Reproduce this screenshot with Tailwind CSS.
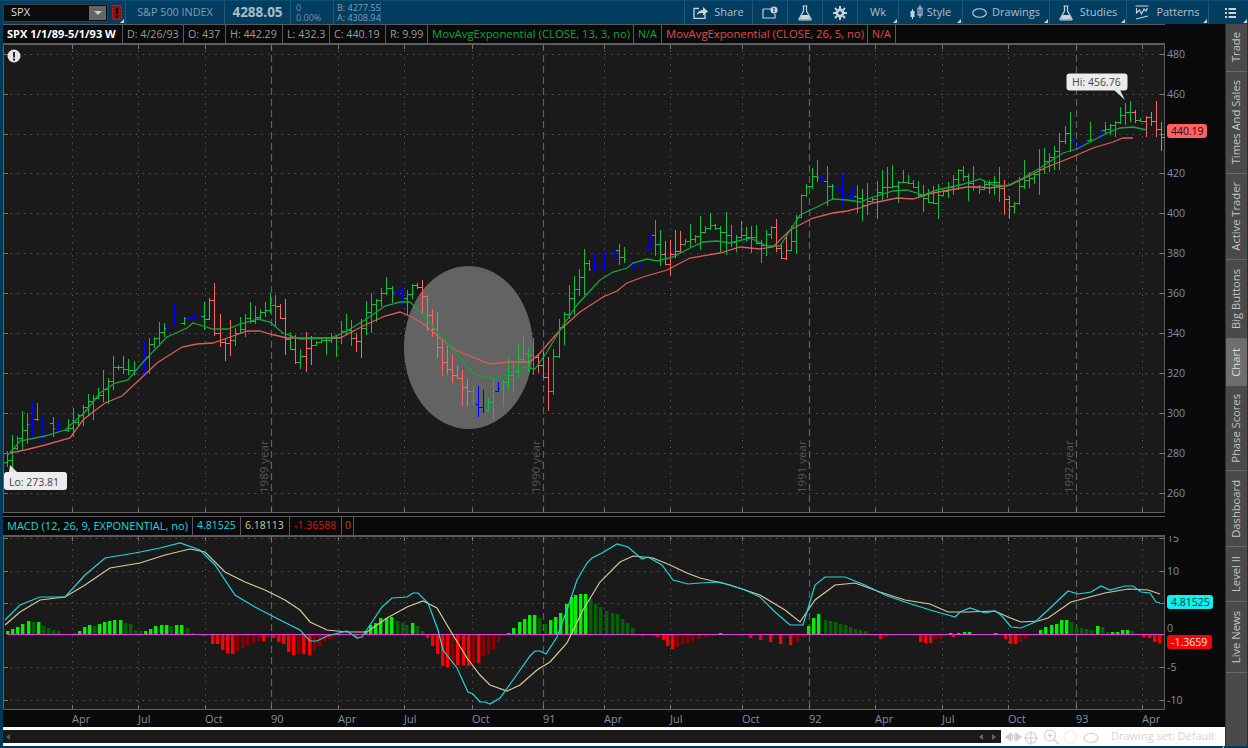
<!DOCTYPE html>
<html lang="en">
<head>
<meta charset="UTF-8">
<title>SPX Chart</title>
<script src="https://cdn.jsdelivr.net/npm/@tailwindcss/browser@4"></script>
</head>
<body class="bg-[#033a5a]">
<div class="w-[1248px] h-[748px] overflow-hidden flex flex-col bg-[#033a5a] text-[#aebfcc] [font-family:'Open_Sans',sans-serif]">

  <!-- top toolbar -->
  <header class="h-[24px] flex items-stretch text-[11px] bg-[#033d5f] border-t border-[#0a4d72]">
    <div class="w-[126px] relative flex items-center border-r border-[#1c5678] pl-[3px]">
      <div class="w-[105px] h-[18px] bg-[#0c0c0c] border border-[#3a3a3a] rounded-[2px] flex items-center justify-between pl-[7px] pr-[1px] text-white">
        <span class="text-[#dddddd]">SPX</span>
        <span class="w-[17px] h-[14px] bg-[#666666] flex items-center justify-center">
          <span class="w-0 h-0 border-l-[4px] border-r-[4px] border-t-[4px] border-l-transparent border-r-transparent border-t-[#cccccc]"></span>
        </span>
      </div>
      <svg class="ml-[4px]" width="10" height="15" viewBox="0 0 10 15"><rect x="0.5" y="0.5" width="9" height="14" rx="1" fill="#8f1010" stroke="#d02020" stroke-dasharray="2 1"/><rect x="4" y="3" width="2" height="6" fill="#100000"/><rect x="4" y="10.500" width="2" height="2" fill="#100000"/></svg>
      <span class="absolute right-[1px] bottom-[1px] w-0 h-0 border-l-[4px] border-b-[4px] border-l-transparent border-b-[#c8d4dc]"></span>
    </div>
    <div class="w-[99px] flex items-center justify-center border-r border-[#1c5678] text-[#7f9db3] text-[10.800px]">S&amp;P 500 INDEX</div>
    <div class="w-[66px] flex items-center justify-center border-r border-[#1c5678] text-[13.500px] font-bold text-[#a9bdca]">4288.05</div>
    <div class="w-[43px] flex flex-col justify-center pl-[5px] border-r border-[#1c5678] text-[9px] leading-[10px] text-[#6f8fa6]"><span>0</span><span>0.00%</span></div>
    <div class="w-[47px] flex flex-col justify-center pl-[3px] border-r border-[#1c5678] text-[9px] leading-[10px] text-[#7f9db3] whitespace-nowrap"><span>B: 4277.55</span><span>A: 4308.94</span></div>
    <div class="w-[304px] border-r border-[#1c5678]"></div>

    <div class="w-[68px] flex items-center justify-center gap-[6px] border-r border-[#1c5678]">
      <svg width="15" height="13" viewBox="0 0 15 13" fill="none"><path d="M6 2.500H1v10h11V8" stroke="#c8d4dc" stroke-width="1.300"/><path d="M3.500 9C4.500 5.500 7 4 10 4V1l5 4.500L10 9.500V7C7.500 7 5 7.500 3.500 9z" fill="#c8d4dc"/></svg>
      <span>Share</span>
    </div>
    <div class="w-[35px] flex items-center justify-center border-r border-[#1c5678]">
      <svg width="16" height="13" viewBox="0 0 16 13" fill="none"><path d="M1 3h8M1 3v9h12V8" stroke="#c8d4dc" stroke-width="1.200"/><circle cx="12" cy="4" r="3.600" fill="#c8d4dc"/><rect x="11.400" y="1.800" width="1.200" height="2.800" fill="#033d5f"/><rect x="11.400" y="5" width="1.200" height="1.100" fill="#033d5f"/></svg>
    </div>
    <div class="w-[35px] flex items-center justify-center border-r border-[#1c5678]">
      <svg width="14" height="16" viewBox="0 0 14 16" fill="none"><path d="M4.500 1h5M5.500 1v5L1 14c-.3.6 0 1 .7 1h10.600c.7 0 1-.4.7-1L8.500 6V1" stroke="#c8d4dc" stroke-width="1.200"/><path d="M3.700 10h6.600l2.200 4.500h-11z" fill="#c8d4dc"/></svg>
    </div>
    <div class="w-[35px] flex items-center justify-center border-r border-[#1c5678]">
      <svg width="14" height="14" viewBox="0 0 14 14"><path d="M7 2.500a4.500 4.500 0 100 9 4.500 4.500 0 000-9zm0 2.700a1.800 1.800 0 110 3.600 1.800 1.800 0 010-3.600z" fill="#c8d4dc" fill-rule="evenodd"/><path d="M7 0v3M7 11v3M0 7h3M11 7h3M2 2l2 2M10 10l2 2M12 2l-2 2M4 10l-2 2" stroke="#c8d4dc" stroke-width="2"/></svg>
    </div>
    <div class="w-[41px] relative flex items-center justify-center border-r border-[#1c5678]"><span>Wk</span><span class="absolute right-[1px] bottom-[1px] w-0 h-0 border-l-[4px] border-b-[4px] border-l-transparent border-b-[#c8d4dc]"></span></div>
    <div class="w-[64px] relative flex items-center justify-center gap-[4px] border-r border-[#1c5678]">
      <svg width="13" height="15" viewBox="0 0 13 15"><rect x="0.500" y="6" width="4" height="6" fill="#c8d4dc"/><rect x="2" y="4" width="1" height="10" fill="#c8d4dc"/><rect x="8" y="3" width="4" height="7" fill="none" stroke="#c8d4dc"/><rect x="9.500" y="0" width="1" height="13" fill="#c8d4dc"/></svg>
      <span>Style</span><span class="absolute right-[1px] bottom-[1px] w-0 h-0 border-l-[4px] border-b-[4px] border-l-transparent border-b-[#c8d4dc]"></span>
    </div>
    <div class="w-[87px] relative flex items-center justify-center gap-[5px] border-r border-[#1c5678]">
      <svg width="15" height="10" viewBox="0 0 15 10"><ellipse cx="7.500" cy="5" rx="6.800" ry="4.300" fill="none" stroke="#c8d4dc" stroke-width="1.100"/></svg>
      <span>Drawings</span><span class="absolute right-[1px] bottom-[1px] w-0 h-0 border-l-[4px] border-b-[4px] border-l-transparent border-b-[#c8d4dc]"></span>
    </div>
    <div class="w-[77px] relative flex items-center justify-center gap-[7px] border-r border-[#1c5678]">
      <svg width="14" height="16" viewBox="0 0 14 16" fill="none"><path d="M4.500 1h5M5.500 1v5L1 14c-.3.6 0 1 .7 1h10.600c.7 0 1-.4.7-1L8.500 6V1" stroke="#c8d4dc" stroke-width="1.200"/><path d="M3.700 10h6.600l2.200 4.500h-11z" fill="#c8d4dc"/></svg>
      <span>Studies</span><span class="absolute right-[1px] bottom-[1px] w-0 h-0 border-l-[4px] border-b-[4px] border-l-transparent border-b-[#c8d4dc]"></span>
    </div>
    <div class="w-[82px] relative flex items-center justify-center gap-[7px] border-r border-[#1c5678]">
      <svg width="14" height="15" viewBox="0 0 14 15" fill="none" stroke="#c8d4dc" stroke-width="1.100"><path d="M0.500 1h13M1 14L13 11M1.500 3v5l3-3 2 4 2.500-5 2 2 1.500-3"/></svg>
      <span>Patterns</span><span class="absolute right-[1px] bottom-[1px] w-0 h-0 border-l-[4px] border-b-[4px] border-l-transparent border-b-[#c8d4dc]"></span>
    </div>
    <div class="flex-1 relative flex items-center justify-center">
      <svg class="ml-[3px]" width="11" height="10" viewBox="0 0 11 10" fill="#c8d4dc"><rect y="0" width="2" height="2"/><rect x="3.500" y="0" width="7.500" height="2"/><rect y="4" width="2" height="2"/><rect x="3.500" y="4" width="7.500" height="2"/><rect y="8" width="2" height="2"/><rect x="3.500" y="8" width="7.500" height="2"/></svg>
      <span class="absolute right-[1px] bottom-[1px] w-0 h-0 border-l-[4px] border-b-[4px] border-l-transparent border-b-[#c8d4dc]"></span>
    </div>
  </header>

  <div class="flex-1 flex pl-[3px] pb-[2px] min-h-0">
    <!-- chart column -->
    <main class="w-[1222px] flex flex-col bg-[#0a0a0a]">
      <div class="h-[20px] shrink-0 flex text-[10.700px] border-t border-b border-[#5a5a5a] whitespace-nowrap bg-[#0a0a0a] text-[#9a9a9a] w-[1162px]">
        <div class="w-[120px] flex items-center pl-[4px] border-r border-[#5a5a5a] font-bold text-white text-[11px]">SPX 1/1/89-5/1/93 W</div>
        <div class="w-[61px] flex items-center pl-[4px] border-r border-[#5a5a5a]">D: 4/26/93</div>
        <div class="w-[42px] flex items-center pl-[4px] border-r border-[#5a5a5a]">O: 437</div>
        <div class="w-[57px] flex items-center pl-[4px] border-r border-[#5a5a5a]">H: 442.29</div>
        <div class="w-[47px] flex items-center pl-[4px] border-r border-[#5a5a5a]">L: 432.3</div>
        <div class="w-[56px] flex items-center pl-[4px] border-r border-[#5a5a5a]">C: 440.19</div>
        <div class="w-[42px] flex items-center pl-[4px] border-r border-[#5a5a5a]">R: 9.99</div>
        <div class="w-[206px] flex items-center pl-[4px] border-r border-[#5a5a5a] text-[#12a53a] text-[11.300px]">MovAvgExponential (CLOSE, 13, 3, no)</div>
        <div class="w-[28px] flex items-center pl-[4px] border-r border-[#5a5a5a] text-[#12a53a]">N/A</div>
        <div class="w-[206px] flex items-center pl-[4px] border-r border-[#5a5a5a] text-[#e24b4b] text-[11.300px]">MovAvgExponential (CLOSE, 26, 5, no)</div>
        <div class="w-[28px] flex items-center pl-[4px] border-r border-[#5a5a5a] text-[#e24b4b]">N/A</div>
      </div>
      <svg id="price" class="block shrink-0" width="1222" height="469" viewBox="3 44 1222 469"></svg>
      <div class="h-[3px] shrink-0"></div>
      <div class="h-[20px] shrink-0 flex text-[10.500px] border-t border-b border-[#5a5a5a] whitespace-nowrap w-[1162px]">
        <div class="w-[190px] flex items-center pl-[4px] border-r border-[#5a5a5a] text-[#1fd7df] text-[11px]">MACD (12, 26, 9, EXPONENTIAL, no)</div>
        <div class="w-[48px] flex items-center pl-[4px] border-r border-[#5a5a5a] text-[#1fd7df]">4.81525</div>
        <div class="w-[49px] flex items-center pl-[4px] border-r border-[#5a5a5a] text-[#d8c89a]">6.18113</div>
        <div class="w-[52px] flex items-center pl-[4px] border-r border-[#5a5a5a] text-[#e01010]">-1.36588</div>
        <div class="w-[12px] flex items-center pl-[3px] border-r border-[#5a5a5a] text-[#c04040]">0</div>
      </div>
      <svg id="macd" class="block shrink-0" width="1222" height="191" viewBox="3 536 1222 191"></svg>
      <div class="h-[19px] shrink-0 bg-white flex items-center">
        <div class="w-[998px] shrink-0 h-[13px] bg-[#1a1a1a] flex items-center justify-between pl-[3px] pr-[5px] text-[#777777]">
          <span class="w-0 h-0 border-t-[3px] border-b-[3px] border-r-[4px] border-t-transparent border-b-transparent border-r-[#555555]"></span>
          <span class="flex gap-[9px]">
            <span class="w-0 h-0 border-t-[3px] border-b-[3px] border-r-[4px] border-t-transparent border-b-transparent border-r-[#666666]"></span>
            <span class="w-0 h-0 border-t-[3px] border-b-[3px] border-l-[4px] border-t-transparent border-b-transparent border-l-[#666666]"></span>
          </span>
        </div>
        <div class="flex-1 flex items-center text-[11px] text-[#d4d4d4] whitespace-nowrap relative">
          <svg class="ml-[3px] shrink-0" width="107" height="16" viewBox="0 0 107 16" fill="none" stroke="#d0d0d0" stroke-width="1.200">
            <path d="M2 8l5-4v8zM17 8l-5-4v8z" fill="#d0d0d0"/><path d="M8.500 5v6M10.500 5v6"/>
            <circle cx="27" cy="9" r="5.500"/><path d="M27 2v14M20 9h14"/>
            <circle cx="46" cy="6.500" r="5.500"/><path d="M50 10.500l5 5M43.500 6.500h5M46 4v5"/>
            <circle cx="66" cy="8" r="6" stroke="#eeeeee"/>
            <ellipse cx="87" cy="9" rx="7" ry="4.500"/>
          </svg>
          <span>Drawing set: Default</span>
          <span class="absolute right-[1px] bottom-[-5px] w-0 h-0 border-l-[4px] border-b-[4px] border-l-transparent border-b-[#d8d8d8]"></span>
        </div>
      </div>
    </main>

    <!-- side tabs -->
    <nav class="w-[21px] ml-[1px] flex flex-col bg-[#4a4a4a] text-[11.200px] text-[#c4c4c4] whitespace-nowrap">
      <div class="h-[48px] flex items-center justify-center border-b border-[#6a6a6a]"><span class="[writing-mode:vertical-rl] rotate-180">Trade</span></div>
      <div class="h-[102px] flex items-center justify-center border-b border-[#6a6a6a]"><span class="[writing-mode:vertical-rl] rotate-180">Times And Sales</span></div>
      <div class="h-[86px] flex items-center justify-center border-b border-[#6a6a6a]"><span class="[writing-mode:vertical-rl] rotate-180">Active Trader</span></div>
      <div class="h-[79px] flex items-center justify-center border-b border-[#6a6a6a]"><span class="[writing-mode:vertical-rl] rotate-180">Big Buttons</span></div>
      <div class="h-[47px] flex items-center justify-center border-b border-[#6a6a6a] bg-[#6e6e6e] text-[#dddddd]"><span class="[writing-mode:vertical-rl] rotate-180">Chart</span></div>
      <div class="h-[85px] flex items-center justify-center border-b border-[#6a6a6a]"><span class="[writing-mode:vertical-rl] rotate-180">Phase Scores</span></div>
      <div class="h-[76px] flex items-center justify-center border-b border-[#6a6a6a]"><span class="[writing-mode:vertical-rl] rotate-180">Dashboard</span></div>
      <div class="h-[55px] flex items-center justify-center border-b border-[#6a6a6a]"><span class="[writing-mode:vertical-rl] rotate-180">Level II</span></div>
      <div class="h-[71px] flex items-center justify-center border-b border-[#6a6a6a]"><span class="[writing-mode:vertical-rl] rotate-180">Live News</span></div>
    </nav>
  </div>
</div>

<script>
// everything below is in page pixels, the svg viewBoxes line up with the page
const ticks = [72,138,205,271,338,404,472,543,604,670,742,809,875,942,1008,1076,1142];
const years = {271:'1989 year',543:'1990 year',809:'1991 year',1076:'1992 year'};
const tickNames = ['Apr','Jul','Oct','90','Apr','Jul','Oct','91','Apr','Jul','Oct','92','Apr','Jul','Oct','93','Apr'];

const ema13 = [[8,455],[20,441],[45,436],[65,430],[85,412],[100,393],[115,383],[128,380],[143,362],[167,337],[187,328],[193,323],[203,326],[213,329],[228,329],[240,324],[258,319],[270,322],[283,333],[300,339],[330,338],[345,332],[365,320],[385,306],[400,302],[410,302],[425,317],[440,335],[460,358],[475,375],[495,379],[510,373],[525,367],[535,369],[547,352],[560,330],[577,305],[600,280],[613,272],[627,268],[633,263],[647,259],[657,261],[673,257],[690,248],[703,242],[717,241],[730,243],[750,238],[767,246],[780,246],[800,215],[817,207],[833,199],[847,200],[860,202],[870,198],[893,191],[907,190],[923,195],[937,190],[960,185],[980,179],[993,185],[1007,186],[1023,178],[1040,168],[1063,153],[1077,149],[1090,142],[1107,133],[1120,128],[1133,127],[1147,130]];
const ema26 = [[10,453],[25,450],[45,445],[70,438],[83,420],[93,412],[105,403],[122,396],[137,382],[157,363],[182,347],[197,344],[213,343],[233,336],[247,331],[260,331],[270,334],[287,338],[300,338],[340,338],[365,325],[385,316],[400,312],[412,317],[425,325],[440,338],[455,350],[475,358],[490,364],[510,362],[530,362],[540,353],[560,330],[580,312],[603,297],[617,291],[627,283],[643,277],[667,270],[690,258],[720,253],[740,247],[760,249],[773,247],[790,230],[813,218],[833,213],[847,211],[860,208],[873,203],[897,198],[913,199],[933,193],[967,187],[980,187],[990,188],[1010,185],[1027,177],[1047,167],[1070,158],[1093,148],[1113,142],[1123,138],[1133,138]];
const closes = [[7,462],[15,440],[25,425],[35,420],[45,425],[60,430],[70,425],[80,412],[90,400],[100,392],[110,375],[115,365],[130,372],[140,362],[150,345],[160,330],[170,320],[178,322],[190,318],[200,315],[205,320],[210,295],[215,340],[225,345],[235,335],[245,320],[255,318],[265,310],[272,300],[278,310],[285,340],[295,360],[305,350],[315,340],[330,338],[345,330],[355,345],[365,315],[375,300],[385,290],[395,290],[405,300],[412,285],[420,290],[425,310],[435,340],[445,370],[455,375],[465,390],[475,405],[485,410],[490,395],[500,385],[510,375],[520,355],[530,355],[540,365],[548,390],[555,340],[565,310],[575,285],[585,260],[590,270],[600,265],[615,250],[625,262],[640,265],[650,235],[665,262],[680,245],[695,235],[712,225],[730,240],[745,235],[760,245],[770,225],[780,260],[790,245],[800,200],[810,175],[820,180],[835,190],[850,195],[865,205],[880,190],[895,183],[910,185],[930,205],[945,190],[960,170],[975,190],[990,180],[1000,190],[1012,210],[1020,185],[1035,175],[1050,155],[1065,135],[1075,145],[1090,140],[1100,130],[1110,125],[1120,115],[1127,110],[1135,122],[1150,118],[1160,137]];
const macdLine = [[5,620],[20,605],[40,597],[65,597],[85,575],[105,558],[135,553],[160,548],[180,543],[200,550],[215,565],[235,595],[255,607],[280,620],[300,630],[310,641],[317,641],[327,636],[347,631],[357,638],[362,637],[372,622],[382,607],[392,598],[407,597],[413,593],[418,593],[428,603],[438,630],[443,650],[457,668],[468,692],[473,694],[480,702],[485,702],[490,704],[500,698],[513,680],[530,656],[535,651],[540,651],[546,654],[557,637],[567,610],[577,580],[587,563],[592,558],[602,553],[617,544],[628,547],[642,559],[648,557],[662,565],[673,580],[688,584],[700,583],[720,582],[745,590],[760,597],[775,612],[790,625],[803,625],[815,585],[825,577],[845,577],[865,585],[885,595],[905,602],[930,610],[948,615],[955,617],[960,612],[970,608],[985,613],[995,611],[1001,615],[1011,627],[1021,628],[1035,622],[1048,610],[1068,591],[1078,594],[1091,592],[1101,586],[1110,590],[1125,586],[1133,586],[1141,592],[1150,593],[1156,602],[1160,603]];
const signalLine = [[5,625],[20,612],[40,600],[65,597],[85,585],[110,568],[140,563],[165,555],[190,549],[205,552],[225,572],[245,582],[265,590],[285,600],[300,610],[310,622],[327,630],[347,632],[367,632],[387,618],[407,607],[423,601],[437,608],[450,630],[467,658],[480,675],[490,685],[507,691],[520,685],[537,670],[550,662],[567,643],[583,610],[600,582],[620,562],[633,556],[653,558],[670,565],[687,573],[700,578],[730,585],[760,595],[785,610],[800,622],[815,600],[835,585],[855,583],[880,592],[905,600],[930,604],[948,612],[968,612],[995,611],[1008,617],[1021,622],[1038,621],[1048,618],[1071,602],[1105,593],[1128,589],[1148,590],[1160,594]];
// histogram read off the picture: x, height above (+) or below (-) the zero line
const histo = [[7,3],[12,5],[17,7],[22,10],[28,13],[33,12],[38,12],[43,8],[48,6],[53,4],[58,3],[74,1],[79,3],[84,7],[89,9],[94,8],[99,10],[104,12],[109,13],[114,14],[120,14],[125,11],[130,10],[135,4],[140,3],[145,3],[150,5],[155,8],[161,9],[166,9],[171,8],[176,9],[181,9],[187,6],[192,1],[197,-1],[202,-2],[212,-10],[217,-10],[222,-16],[227,-19],[232,-20],[237,-17],[242,-14],[247,-11],[253,-9],[258,-7],[263,-7],[268,-4],[273,-4],[278,-8],[283,-10],[288,-18],[293,-21],[298,-20],[303,-20],[309,-21],[314,-16],[319,-12],[324,-7],[329,-5],[333,-3],[355,-3],[360,-2],[365,3],[370,9],[375,11],[380,16],[386,16],[391,17],[397,13],[402,11],[406,9],[412,11],[417,8],[422,3],[427,-4],[432,-12],[437,-20],[442,-32],[447,-33],[452,-31],[457,-31],[463,-31],[468,-32],[473,-29],[478,-29],[483,-22],[488,-20],[493,-15],[498,-8],[503,-2],[508,1],[513,6],[519,12],[524,15],[529,19],[534,19],[539,16],[545,10],[550,14],[555,17],[560,21],[566,30],[571,37],[575,39],[580,40],[585,40],[590,35],[595,30],[600,27],[606,23],[612,21],[617,20],[622,15],[627,11],[632,6],[642,-2],[653,-2],[657,-3],[663,-6],[667,-12],[672,-15],[677,-13],[682,-10],[687,-9],[692,-7],[698,-5],[705,-3],[720,1],[740,-1],[750,-4],[760,-6],[770,-8],[780,-10],[790,-11],[797,-8],[803,-3],[808,8],[813,16],[818,20],[825,14],[830,13],[835,12],[840,10],[845,9],[850,7],[855,5],[860,4],[865,3],[875,-1],[880,-5],[885,-3],[895,-1],[920,-8],[925,-9],[930,-9],[935,-6],[940,-5],[950,1],[953,-3],[958,1],[964,2],[969,2],[980,-1],[985,-1],[995,1],[1000,-1],[1005,-5],[1010,-10],[1015,-10],[1020,-8],[1025,-5],[1030,-2],[1040,4],[1045,7],[1051,9],[1056,10],[1061,14],[1066,14],[1071,12],[1076,7],[1081,6],[1086,5],[1091,4],[1097,8],[1102,7],[1107,2],[1112,2],[1117,2],[1122,4],[1127,4],[1132,3],[1138,-1],[1143,-3],[1149,-4],[1154,-8],[1159,-9]];
// colour of the price bars by stretch of the chart
const redZones = [[206,236],[280,312],[354,364],[409,472],[535,551],[664,681],[775,792],[1000,1012],[1132,1162]];
const blueZones = [[28,66],[128,146],[168,204],[392,408],[476,502],[590,652],[822,852],[1070,1104]];

function at(pts, x) {
  if (x <= pts[0][0]) return pts[0][1];
  for (let i = 1; i < pts.length; i++) {
    if (x <= pts[i][0]) {
      const t = (x - pts[i-1][0]) / (pts[i][0] - pts[i-1][0]);
      return pts[i-1][1] + t * (pts[i][1] - pts[i-1][1]);
    }
  }
  return pts[pts.length-1][1];
}
function inZone(z, x) { return z.some(r => x >= r[0] && x <= r[1]); }
function rnd(i) { const s = Math.sin(i * 127.1 + 3.7) * 43758.5453; return s - Math.floor(s); }
function poly(pts, color, w) {
  return `<polyline points="${pts.map(p => p.join(',')).join(' ')}" fill="none" stroke="${color}" stroke-width="${w}"/>`;
}
function grid(top, bottom, hLines) {
  let s = `<rect x="3" y="${top}" width="1162" height="${bottom-top}" fill="#1a1a1a"/>`;
  hLines.forEach(y => s += `<line x1="4" x2="1165" y1="${y+.5}" y2="${y+.5}" stroke="#5a5a5a" stroke-dasharray="1.300 5.300"/>`);
  ticks.forEach(x => {
    if (years[x]) s += `<line x1="${x+.5}" x2="${x+.5}" y1="${top}" y2="${bottom}" stroke="#5f5f5f" stroke-width="1.200" stroke-dasharray="7 4"/>`;
    else s += `<line x1="${x+.5}" x2="${x+.5}" y1="${top}" y2="${bottom}" stroke="#5a5a5a" stroke-dasharray="1.300 5.300"/>`;
    s += `<line x1="${x+.5}" x2="${x+.5}" y1="${top}" y2="${top+5}" stroke="#777"/><line x1="${x+.5}" x2="${x+.5}" y1="${bottom-5}" y2="${bottom}" stroke="#777"/>`;
  });
  s += `<path d="M3.500 ${top+.5}H1164.500V${bottom-.5}H3.500Z" fill="none" stroke="#5f5f5f"/>`;
  hLines.forEach(y => s += `<line x1="1160" x2="1165" y1="${y+.5}" y2="${y+.5}" stroke="#777"/><line x1="4" x2="8" y1="${y+.5}" y2="${y+.5}" stroke="#777"/>`);
  return s;
}
function axisText(x, y, t, color) {
  return `<text x="${x}" y="${y+4}" font-size="10.600" fill="${color || '#8090a6'}">${t}</text>`;
}

// price panel
const priceY = [54,94,134,173,213,253,293,333,373,413,453,493];
const priceLabels = [480,460,'',420,400,380,360,340,320,300,280,260];
let p = grid(44, 513, priceY);
p += '<ellipse cx="468.500" cy="347.500" rx="64.500" ry="81.500" fill="#666666" fill-opacity="0.960"/>';

const step = 5.06;
let bars = '';
let prev = at(closes, 7);
for (let i = 0; i < 229; i++) {
  const x = Math.round(7 + i * step);
  if (x > 1161) break;
  const c = at(closes, x) + (rnd(i) - .5) * 5;
  const a = rnd(i + 300), b = rnd(i + 600);
  let hi = Math.min(c, prev) - 1 - a * a * 20;
  let lo = Math.max(c, prev) + 1 + b * b * 20;
  if (x >= 1123 && x <= 1127) hi = 103;
  if (i === 0) lo = 467;
  let col = '#10c040';
  if (inZone(redZones, x) && rnd(i + 900) > .12) col = '#ff6464';
  else if (inZone(blueZones, x) && rnd(i + 900) > .25) col = '#0000ff';
  bars += `<path d="M${x+.5} ${Math.round(hi)}V${Math.round(lo)}M${x-3} ${Math.round(prev)+.5}H${x}M${x} ${Math.round(c)+.5}H${x+4}" stroke="${col}" fill="none" shape-rendering="crispEdges"/>`;
  prev = c;
}
p += bars;
p += poly(ema26, '#dc5c5c', 1.300) + poly(ema13, '#12a53a', 1.300);

ticks.forEach(x => {
  if (years[x]) p += `<text transform="translate(${x-3} 493) rotate(-90)" font-size="11.500" fill="#565656">${years[x]}</text>`;
});
p += '<circle cx="14" cy="56" r="6.500" fill="#e4e4e4"/><rect x="13" y="52" width="2" height="5.500" fill="#222"/><rect x="13" y="58.500" width="2" height="2" fill="#222"/>';
// hi / lo callouts
p += '<path d="M1114 90L1125 100L1120 90Z" fill="#e4e4e4"/><rect x="1066.500" y="73.500" width="61" height="17" rx="3" fill="#ececec"/>';
p += '<text x="1072" y="86" font-size="10.500" fill="#444">Hi: 456.76</text>';
p += '<path d="M10 465L17 472H9Z" fill="#e4e4e4"/><rect x="4" y="472" width="63" height="18" rx="3" fill="#ececec"/>';
p += '<text x="9" y="486" font-size="10.500" fill="#444">Lo: 273.81</text>';
// right axis
p += '<rect x="1165" y="44" width="60" height="469" fill="#0a0a0a"/>';
priceY.forEach((y, i) => { if (priceLabels[i]) p += axisText(1167, y, priceLabels[i]); });
p += '<path d="M1171 27H1185M1171 42H1185" stroke="#e8e8e8" stroke-width="1.500"/><path d="M1171 39C1175 39 1175 31 1179 31H1185" stroke="#e8e8e8" fill="none"/>';
p += '<rect x="1167" y="124" width="40" height="14" rx="3" fill="#ff6060"/><text x="1171" y="135" font-size="10.400" fill="#2a0a0a">440.19</text>';
document.getElementById('price').innerHTML = p;

// macd panel
const macdY = [538,571,603,667,700];
let m = grid(536, 710, macdY);
let hist = '', last = 0;
histo.forEach(b => {
  const h = b[1];
  const growing = Math.abs(h) >= Math.abs(last) || h * last < 0;
  const col = h >= 0 ? (growing ? '#00f000' : '#006400') : (growing ? '#ff0000' : '#8b0000');
  hist += `<rect x="${b[0]-1}" y="${h >= 0 ? 634 - h : 634}" width="3.400" height="${Math.abs(h)}" fill="${col}"/>`;
  last = h;
});
m += hist;
m += '<line x1="7" x2="1164" y1="634.500" y2="634.500" stroke="#e840e0" stroke-width="1.200"/>';
m += poly(signalLine, '#d8c89a', 1.200) + poly(macdLine, '#1fd7df', 1.200);
m += '<rect x="1165" y="536" width="60" height="174" fill="#0a0a0a"/>';
[[538,'15'],[571,'10'],[667,'-5'],[700,'-10']].forEach(a => m += axisText(1167, a[0], a[1]));
m += '<rect x="1167" y="595" width="46" height="14" rx="3" fill="#10f0f0"/><text x="1171" y="606" font-size="10.500" fill="#063a3a">4.81525</text>';
m += '<text x="1167" y="632" font-size="10.600" fill="#8090a6">0</text>';
m += '<rect x="1167" y="635" width="45" height="14" rx="3" fill="#f00808"/><text x="1171" y="646" font-size="10.500" fill="#ffe8e8">-1.3659</text>';
ticks.forEach((x, i) => m += `<text x="${x}" y="723" font-size="11" fill="#8090a6">${tickNames[i]}</text>`);
document.getElementById('macd').innerHTML = m;
</script>
</body>
</html>
